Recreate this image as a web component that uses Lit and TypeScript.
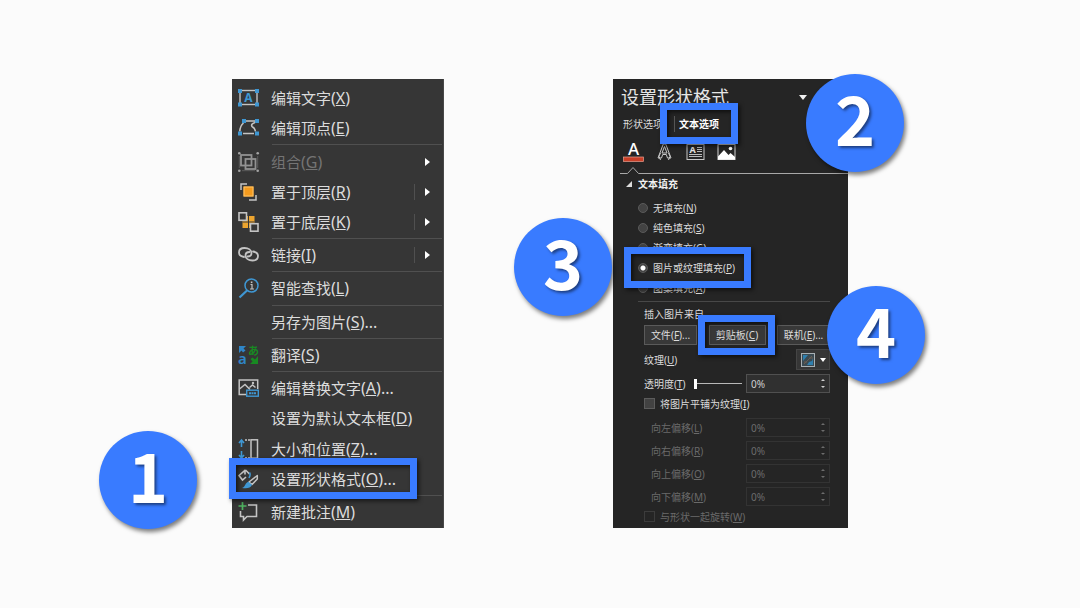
import { LitElement, html, svg, css, nothing, TemplateResult, SVGTemplateResult } from "lit";
import { customElement, property } from "lit/decorators.js";

type Entry = {
  text: string;
  key: string;
  tail?: string;
  icon?: SVGTemplateResult;
  arrow?: boolean;
  split?: boolean;
  off?: boolean;
};

const BLUE = "#3f97d3";
const GREY = "#c4c4c4";

const icons = {
  editText: svg`
    <rect x="2" y="2.500" width="17" height="14" fill="none" stroke=${GREY} stroke-width="1.400"/>
    <g fill=${BLUE}><rect width="4" height="4" y="1"/><rect x="17" y="1" width="4" height="4"/><rect y="14.500" width="4" height="4"/><rect x="17" y="14.500" width="4" height="4"/></g>
    <text x="10.500" y="14" text-anchor="middle" font-size="12" font-weight="700" fill=${BLUE}>A</text>`,
  editPoints: svg`
    <path d="M8 3h9M1.800 13.500Q2 8 5.500 5M17 4.500Q12.500 6 14 8.500Q17 10 17.500 13.500M5 15.500h11" fill="none" stroke=${GREY} stroke-width="1.600"/>
    <g fill=${BLUE}><rect x="4" y="1" width="4" height="4"/><rect x="17" y="1" width="4" height="4"/><rect y="13.500" width="4" height="4"/><rect x="17" y="13.500" width="4" height="4"/></g>`,
  group: svg`
    <g fill="none" stroke="#929292" stroke-width="1.800"><rect x="3" y="3" width="10.500" height="10.500"/><rect x="7.500" y="7" width="10" height="10"/></g>
    <g fill="#a4a4a4"><circle cx="1.300" cy="1.300" r="1.300"/><circle cx="19.700" cy="1.300" r="1.300"/><circle cx="1.300" cy="18.700" r="1.300"/><circle cx="19.700" cy="18.700" r="1.300"/></g>
    <path d="M1.300 4v12M19.700 4v12M4 18.700h13" stroke="#5c5c5c" fill="none"/>`,
  front: svg`
    <path d="M3 8V2h6M18 13v5h-7" fill="none" stroke=${GREY} stroke-width="1.500"/>
    <rect x="5.500" y="4.500" width="10" height="10" fill="#f49b1e"/><rect x="6" y="5" width="9" height="9" fill="none" stroke="#ffc468"/>`,
  back: svg`
    <rect x="4.500" y="4" width="12" height="12" fill="#eda52f"/>
    <path d="M10.500 4v12M4.500 10h12" stroke="#363636" stroke-width="1"/>
    <g fill="#363636" stroke=${GREY} stroke-width="1.600"><rect x="1" y="0.800" width="7.500" height="7.500"/><rect x="12.500" y="11.700" width="7.500" height="7.500"/></g>`,
  link: svg`
    <g fill="none" stroke=${GREY} stroke-width="1.800" stroke-linecap="round">
      <path d="M6 12C3 11.500 1 10 1 7.500S3 3 6.500 3c4 0 7 2 7 5 0 2-1.500 3.500-4 3.500"/><path d="M15 6.500C18 7 20 8.500 20 11s-2 4.500-5.500 4.500c-4 0-7-2-7-5 0-2 1.500-3.500 4-3.500"/></g>`,
  search: svg`
    <circle cx="13.500" cy="7.500" r="6.500" fill="none" stroke=${BLUE} stroke-width="1.500"/>
    <path d="M9 12.500L1.500 19.500" stroke=${BLUE} stroke-width="2.200"/>
    <path d="M12.500 6.500h1.500v4M12 11h4" stroke=${GREY} stroke-width="1.200" fill="none"/><rect x="12.800" y="3.500" width="1.600" height="1.600" fill=${GREY}/>`,
  translate: svg`
    <text x="0" y="18.500" font-size="15" font-weight="600" fill="#2f86c8">a</text>
    <text x="10" y="9.500" font-size="11" font-weight="700" fill="#188a22">あ</text>
    <path d="M1 8V1h7L5.500 3.500l2 2-2.500 2-1.500-2z" fill="#2f86c8"/><path d="M20 11v8h-8l2.500-2.500-2-2.500 2-1.500 2.500 2z" fill="#188a22"/>`,
  altText: svg`
    <path d="M8 16.500H1.200V2h18.500v9" fill="none" stroke=${GREY} stroke-width="1.500"/>
    <path d="M1.500 11L7 6.500l5 5M11.500 9.500L14.500 7l3 2.500" fill="none" stroke=${GREY} stroke-width="1.500"/><circle cx="15" cy="5" r="1.200" fill=${GREY}/>
    <rect x="8.700" y="12.200" width="11.600" height="6" fill="#363636" stroke=${BLUE} stroke-width="1.400"/><path d="M11 15.200h7" stroke=${BLUE} stroke-width="2" stroke-dasharray="2 .5"/>`,
  size: svg`
    <path d="M3.500 1v7M3.500 12v7M1 4l2.500-3L6 4M1 16l2.500 3L6 16" fill="none" stroke=${BLUE} stroke-width="1.600"/>
    <path d="M7 1h5M7 19h5" stroke=${GREY} stroke-width="1.500" stroke-dasharray="2 1"/><rect x="13" y=".8" width="6.500" height="18.400" fill="none" stroke=${GREY} stroke-width="1.500"/>`,
  format: svg`
    <path d="M7.500 .8L1 6.500 4.500 11 8 8M7 1v4.500M7.500 1l4 4" fill="none" stroke=${GREY} stroke-width="1.600"/>
    <path d="M11.500 3.500q1.500 2-.5 5.500" stroke=${BLUE} fill="none" stroke-width="1.500"/>
    <path d="M19.300 6.500v3.500L14 15.500 11 13z" fill="none" stroke=${GREY} stroke-width="1.500" stroke-linejoin="round"/>
    <path d="M10.500 12.800l3.500 3c-1.500 3.500-5 4-10 3.200 3.500-1 3-5.500 6.500-6.200z" fill=${BLUE}/>`,
  comment: svg`
    <path d="M10 3h8.500v11.500H9L5.500 18v-3.500H2.500V9" fill="none" stroke=${GREY} stroke-width="1.600"/><path d="M4.500 0v8M.5 4h8" stroke="#4fb260" stroke-width="1.700"/>`,
};

const groups: Entry[][] = [
  [
    { text: "编辑文字", key: "X", icon: icons.editText },
    { text: "编辑顶点", key: "E", icon: icons.editPoints },
  ],
  [
    { text: "组合", key: "G", icon: icons.group, arrow: true, off: true },
    { text: "置于顶层", key: "R", icon: icons.front, arrow: true, split: true },
    { text: "置于底层", key: "K", icon: icons.back, arrow: true, split: true },
  ],
  [{ text: "链接", key: "I", icon: icons.link, arrow: true, split: true }],
  [{ text: "智能查找", key: "L", icon: icons.search }],
  [{ text: "另存为图片", key: "S", tail: "..." }],
  [{ text: "翻译", key: "S", icon: icons.translate }],
  [
    { text: "编辑替换文字", key: "A", tail: "...", icon: icons.altText },
    { text: "设置为默认文本框", key: "D" },
    { text: "大小和位置", key: "Z", tail: "...", icon: icons.size },
    { text: "设置形状格式", key: "O", tail: "...", icon: icons.format },
  ],
  [{ text: "新建批注", key: "M", icon: icons.comment }],
];

const caption = (text: string, key: string, tail = "") => html`${text}<span class="latin">(<u>${key}</u>)${tail}</span>`;

const shared = css`
  * { box-sizing: border-box; }
  button, input { font: inherit; color: inherit; margin: 0; padding: 0; }
  button { background: none; border: 0; }
  u { text-underline-offset: 1px; text-decoration-thickness: 1px; }
  svg { display: block; flex: none; overflow: visible; }
`;

@customElement("context-menu")
class ContextMenu extends LitElement {
  static styles = [shared, css`
    :host { display: flex; }
    .menu {
      flex: 1; display: flex; flex-direction: column; padding: 4px 0 1px;
      background: #363636; color: #dcdcdc; font-size: 15px; line-height: 20px;
      border: solid #484848; border-width: 0 1px 0 0;
    }
    .item { flex: 1 0 30px; display: flex; align-items: center; padding: 0 13px 0 6px; text-align: left; white-space: nowrap; }
    .item:disabled { color: #747474; }
    .label { flex: 1; padding-left: 12px; }
    .latin { font-size: 16px; }
    .blank { width: 21px; }
    .split { width: 1px; height: 16px; background: #505050; margin-right: 10px; }
    .rule { flex: none; height: 1px; margin: 1px 1px 1px 40px; border: 0; background: #505050; }
  `];

  row(e: Entry) {
    return html`<button class="item" role="menuitem" ?disabled=${e.off}>
      ${e.icon ? html`<svg width="21" height="20" viewBox="0 0 21 20" aria-hidden="true">${e.icon}</svg>` : html`<span class="blank"></span>`}
      <span class="label">${caption(e.text, e.key, e.tail)}</span>
      ${e.split ? html`<span class="split"></span>` : nothing}
      ${e.arrow ? html`<svg width="5" height="8" viewBox="0 0 5 8"><path d="M0 0l5 4-5 4z" fill="#fff"/></svg>` : nothing}
    </button>`;
  }

  render() {
    return html`<div class="menu" role="menu">
      ${groups.map((g, i) => html`${i ? html`<hr class="rule">` : nothing}${g.map((e) => this.row(e))}`)}
    </div>`;
  }
}

@customElement("spin-box")
class SpinBox extends LitElement {
  @property() name = "";
  @property({ type: Boolean }) off = false;
  static styles = [shared, css`
    :host { display: block; width: 84px; }
    .box { display: flex; height: 19px; border: 1px solid #505050; background: #303030; color: #cfcfcf; }
    .off { border-color: #333; background: none; color: #6c6c6c; }
    .field { flex: 1; min-width: 0; padding-left: 4px; border: 0; background: none; outline: 0; }
    .steps { display: flex; flex-direction: column; width: 12px; padding: 1px 0; }
    .step { flex: 1; display: grid; place-items: center; min-height: 0; }
  `];
  render() {
    return html`<div class="box ${this.off ? "off" : ""}">
      <input class="field" type="text" value="0%" aria-label=${this.name} ?disabled=${this.off}>
      <div class="steps">
        <button class="step" aria-label="增加" ?disabled=${this.off}><svg width="4" height="2" viewBox="0 0 4 2"><path d="M0 2l2-2 2 2z" fill="currentColor"/></svg></button>
        <button class="step" aria-label="减少" ?disabled=${this.off}><svg width="4" height="2" viewBox="0 0 4 2"><path d="M0 0l2 2 2-2z" fill="currentColor"/></svg></button>
      </div>
    </div>`;
  }
}

@customElement("format-pane")
class FormatPane extends LitElement {
  static styles = [shared, css`
    :host { display: block; }
    .pane { background: #252525; color: #dcdcdc; font-size: 10px; line-height: 16px; padding: 6px 0 1px; white-space: nowrap; }
    .head { display: flex; align-items: center; justify-content: space-between; height: 24px; padding: 0 41px 0 8px; }
    .title { margin: 0; font-size: 18px; font-weight: 400; line-height: 24px; color: #e6e6e6; }
    .tabs { display: flex; align-items: center; height: 29px; padding-left: 10px; }
    .tab { line-height: 16px; }
    .on { font-weight: 700; color: #fff; border-left: 1px solid #555; margin-left: 11px; padding-left: 4px; }
    .tools { display: flex; gap: 10px; height: 28px; align-items: center; padding-left: 10px; }
    .notch { display: flex; height: 8px; padding-left: 7px; }
    .notch::after { content: ""; flex: 1; border-bottom: 1px solid #a8a8a8; }
    .section { display: flex; align-items: center; gap: 6px; height: 20px; margin: 0; padding-left: 13px; font-size: 10px; font-weight: 700; color: #f0f0f0; }
    .fills { margin: 0; border: 0; padding: 4px 0 3px 25px; }
    .choice, .check { display: flex; align-items: center; gap: 5px; height: 20px; }
    .check { height: 21px; }
    .radio { appearance: none; width: 10px; height: 10px; border-radius: 50%; border: 1px solid #5a5a5a; background: #434343; }
    .radio:checked { background: radial-gradient(circle, #fff 2px, #434343 3px); }
    .tick { appearance: none; width: 11px; height: 11px; border: 1px solid #5c5c5c; background: #424242; }
    .tick:disabled { border-color: #3c3c3c; background: none; }
    .body { margin: 0 18px 0 25px; padding-left: 6px; border-top: 1px solid #484848; }
    .from { margin: 0; padding: 4px 0 3px; }
    .sources { display: flex; justify-content: space-between; height: 20px; }
    .source { flex: 0 0 53px; border: 1px solid #5a5a5a; background: #383838; line-height: 16px; }
    .wide { flex-basis: 57px; }
    .line { display: flex; align-items: center; justify-content: space-between; margin-top: 4px; }
    .texture { display: flex; align-items: center; justify-content: center; gap: 5px; width: 34px; height: 21px; border: 1px solid #454545; background: #363636; }
    .slider { appearance: none; width: 48px; height: 11px; background: linear-gradient(#b8b8b8, #b8b8b8) center / 100% 1px no-repeat; margin: 0 4px 0 auto; }
    .slider::-webkit-slider-thumb { appearance: none; width: 3px; height: 10px; background: #fff; }
    .off { color: #6a6a6a; }
    .shift { padding-left: 7px; }
  `];

  fill(text: string, key: string, checked = false): TemplateResult {
    return html`<label class="choice"><input class="radio" type="radio" name="fill" ?checked=${checked}><span>${caption(text, key)}</span></label>`;
  }

  render() {
    return html`<section class="pane">
      <header class="head"><h2 class="title">设置形状格式</h2>
        <button aria-label="窗格选项"><svg width="8" height="5" viewBox="0 0 8 5"><path d="M0 0h8L4 5z" fill="#f0f0f0"/></svg></button></header>
      <div class="tabs" role="tablist"><button class="tab" role="tab">形状选项</button><button class="tab on" role="tab" aria-selected="true">文本选项</button></div>
      <div class="tools">
        <button aria-label="文本填充与轮廓"><svg width="21" height="22" viewBox="0 0 21 22"><text x="10.500" y="14" text-anchor="middle" font-size="17" font-weight="500" fill="#fff">A</text><rect x=".5" y="16" width="20" height="4.500" fill="#c83f28" stroke="#e8a090" stroke-width=".7"/></svg></button>
        <button aria-label="文本效果"><svg width="21" height="22" viewBox="0 0 21 22"><g fill="none" stroke="#c8c8c8"><path d="M4 17L9.300 3h2.400L17 17h-3.500l-1.200-3.500H8.700L7.500 17z"/><path d="M10.500 5.500L8 12h5z"/><path d="M6.500 12q-3 3 0 7M14.500 12q3 3 0 7"/></g></svg></button>
        <button aria-label="文本框"><svg width="21" height="22" viewBox="0 0 21 22"><rect x="2" y="3.500" width="17" height="15" fill="none" stroke="#c8c8c8"/><text x="7.500" y="12" text-anchor="middle" font-size="9" font-weight="700" fill="#e0e0e0">A</text><path d="M12 6.500h5M12 8.500h5M12 10.500h5M4 13.500h13M4 15.500h13" stroke="#bbb"/></svg></button>
        <button aria-label="图片"><svg width="21" height="22" viewBox="0 0 21 22"><rect x="2" y="3.500" width="17" height="15" fill="none" stroke="#d8d8d8"/><path d="M2 18.500v-3L8 9l4.500 5 2-2 4.500 4v2.500z" fill="#fff"/><circle cx="14.500" cy="7.500" r="1.800" fill="#fff"/></svg></button>
      </div>
      <div class="notch"><svg width="19" height="8" viewBox="0 0 19 8"><path d="M0 7.500h7.500L13 1.500l5.500 6h1" fill="none" stroke="#a8a8a8"/></svg></div>
      <h3 class="section"><svg width="6" height="6" viewBox="0 0 6 6"><path d="M6 0v6H0z" fill="#ddd"/></svg>文本填充</h3>
      <fieldset class="fills" aria-label="文本填充">
        ${this.fill("无填充", "N")}${this.fill("纯色填充", "S")}${this.fill("渐变填充", "G")}${this.fill("图片或纹理填充", "P", true)}${this.fill("图案填充", "A")}
      </fieldset>
      <div class="body">
        <p class="from">插入图片来自</p>
        <div class="sources"><button class="source">${caption("文件", "F", "...")}</button><button class="source wide">${caption("剪贴板", "C")}</button><button class="source">${caption("联机", "E", "...")}</button></div>
        <div class="line"><span>${caption("纹理", "U")}</span>
          <button class="texture" aria-label="纹理"><svg width="14" height="14" viewBox="0 0 14 14"><rect x=".5" y=".5" width="13" height="13" fill="#3b4a52" stroke="#a8b0b4"/><path d="M2 2h5L2 8zM12 5v7H6l2-3 3-1z" fill="#2f7fae"/><path d="M3 11l8-8M3 9h3M8 5h4" stroke="#6b5d50"/></svg><svg width="6" height="4" viewBox="0 0 6 4"><path d="M0 0h6L3 4z" fill="#fff"/></svg></button></div>
        <div class="line"><label for="alpha">${caption("透明度", "T")}</label><input class="slider" id="alpha" type="range" value="0"><spin-box name="透明度"></spin-box></div>
        <label class="check"><input class="tick" type="checkbox"><span>${caption("将图片平铺为纹理", "I")}</span></label>
        ${[["左", "L"], ["右", "R"], ["上", "O"], ["下", "M"]].map(([d, k]) => html`<div class="line shift off"><span>${caption(`向${d}偏移`, k)}</span><spin-box name=${`向${d}偏移`} off></spin-box></div>`)}
        <label class="check off"><input class="tick" type="checkbox" disabled><span>${caption("与形状一起旋转", "W")}</span></label>
      </div>
    </section>`;
  }
}

@customElement("app-root")
class AppRoot extends LitElement {
  static styles = [shared, css`
    :host { display: block; font-family: "Noto Sans", "Noto Sans CJK SC", sans-serif; }
    .page { min-height: 100vh; display: flex; align-items: center; justify-content: center; background: #fbfbfb; padding-bottom: 1px; }
    .stage { display: grid; grid-template-columns: 212px 235px; gap: 169px; }
    .panel { position: relative; display: grid; }
    .badge {
      position: absolute; width: 98px; height: 98px; border-radius: 50%; text-align: center;
      background: #397bff; color: #fff; font: 700 68px/86px "Noto Sans CJK SC", sans-serif;
      box-shadow: 2px 3px 4px rgba(0, 0, 0, .5); text-shadow: 2px 2px 3px rgba(0, 0, 0, .5);
    }
    .frame { position: absolute; border: 7px solid #397bff; filter: drop-shadow(2px 2px 2px rgba(0, 0, 0, .6)); pointer-events: none; }
    .b1 { left: -133px; top: 352px; }
    .b2 { left: 193px; top: -5px; }
    .b3 { left: -99px; top: 139px; }
    .b4 { left: 214px; top: 207px; }
    .f1 { left: -3px; top: 379px; width: 188px; height: 41px; }
    .f2 { left: 47px; top: 24px; width: 78px; height: 41px; }
    .f3 { left: 11px; top: 168px; width: 127px; height: 41px; }
    .f4 { left: 85px; top: 236px; width: 77px; height: 40px; }
  `];
  render() {
    return html`<main class="page"><div class="stage">
      <div class="panel"><context-menu></context-menu><span class="frame f1"></span><span class="badge b1">1</span></div>
      <div class="panel"><format-pane></format-pane><span class="frame f2"></span><span class="frame f3"></span><span class="frame f4"></span>
        <span class="badge b2">2</span><span class="badge b3">3</span><span class="badge b4">4</span></div>
    </div></main>`;
  }
}
